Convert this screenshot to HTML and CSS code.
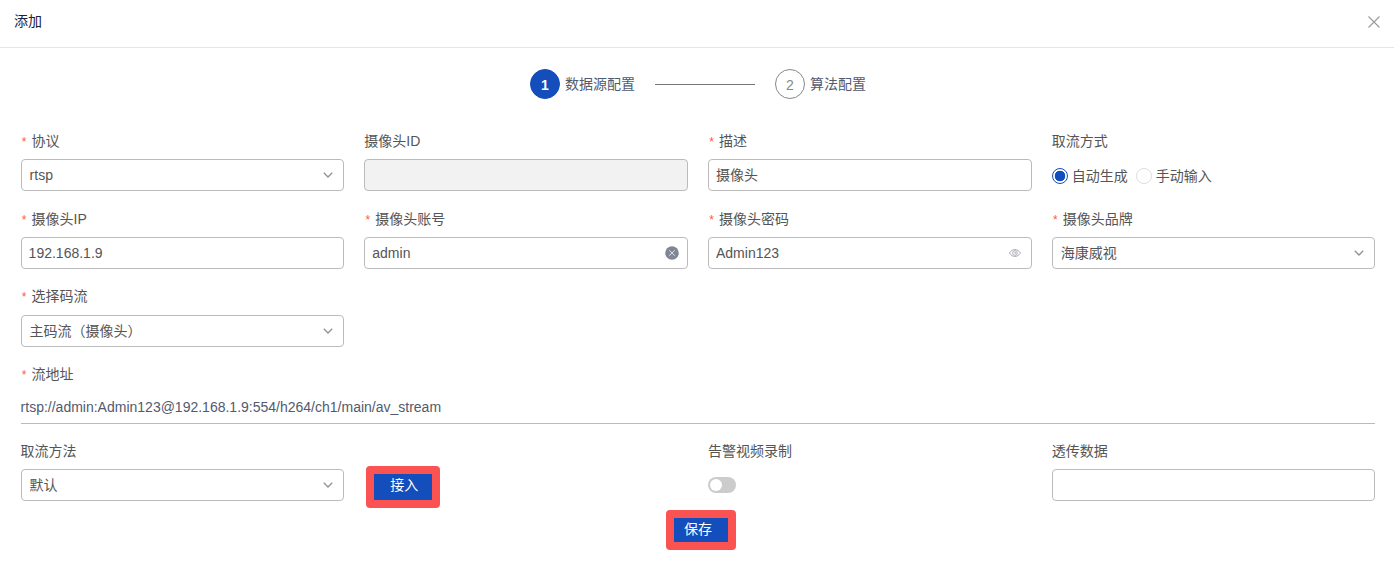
FILE: index.html
```
<!DOCTYPE html>
<html lang="zh-CN">
<head>
    <meta charset="UTF-8">
    <meta name="viewport" content="width=device-width, initial-scale=1.0">
    <title>添加</title>
    <link rel="stylesheet" href="styles.css">
</head>
<body>
    <div class="head">
        <h1 class="title">添加</h1>
        <svg class="close" viewBox="0 0 14 14"><path d="M1.5 1.5l11 11M12.5 1.5l-11 11"/></svg>
    </div>

    <!-- Steps -->
    <div class="steps">
        <span class="step-num active">1</span>
        <span class="step-name">数据源配置</span>
        <span class="step-line"></span>
        <span class="step-num">2</span>
        <span class="step-name">算法配置</span>
    </div>

    <form class="camera-form">
        <div class="field">
            <label class="required">协议</label>
            <div class="box select">rtsp<svg class="arrow" viewBox="0 0 10 6"><path d="M0.8 0.8L5 5l4.2-4.2"/></svg></div>
        </div>
        <div class="field">
            <label>摄像头ID</label>
            <div class="box disabled"></div>
        </div>
        <div class="field">
            <label class="required">描述</label>
            <div class="box">摄像头</div>
        </div>
        <div class="field">
            <label>取流方式</label>
            <div class="radios">
                <span class="radio checked"></span><span class="radio-text">自动生成</span>
                <span class="radio"></span><span class="radio-text">手动输入</span>
            </div>
        </div>

        <div class="field">
            <label class="required">摄像头IP</label>
            <div class="box">192.168.1.9</div>
        </div>
        <div class="field">
            <label class="required">摄像头账号</label>
            <div class="box">admin<svg class="clear" viewBox="0 0 14 14"><circle cx="7" cy="7" r="6.8"/><path d="M4.2 4.2l5.6 5.6M9.8 4.2L4.2 9.8"/></svg></div>
        </div>
        <div class="field">
            <label class="required">摄像头密码</label>
            <div class="box">Admin123<svg class="eye" viewBox="0 0 12 8"><path d="M0.5 4C3.2-0.6 8.8-0.6 11.5 4C8.8 8.6 3.2 8.6 0.5 4z"/><circle cx="6" cy="4" r="2.3"/><path d="M6 2.8v1.4h1.2"/></svg></div>
        </div>
        <div class="field">
            <label class="required">摄像头品牌</label>
            <div class="box select">海康威视<svg class="arrow" viewBox="0 0 10 6"><path d="M0.8 0.8L5 5l4.2-4.2"/></svg></div>
        </div>

        <div class="field first stream">
            <label class="required">选择码流</label>
            <div class="box select">主码流（摄像头）<svg class="arrow" viewBox="0 0 10 6"><path d="M0.8 0.8L5 5l4.2-4.2"/></svg></div>
        </div>

        <div class="field full">
            <label class="required">流地址</label>
            <div class="address">rtsp://admin:Admin123@192.168.1.9:554/h264/ch1/main/av_stream</div>
        </div>

        <div class="field first">
            <label>取流方法</label>
            <div class="box select">默认<svg class="arrow" viewBox="0 0 10 6"><path d="M0.8 0.8L5 5l4.2-4.2"/></svg></div>
        </div>
        <div class="field access">
            <button type="button" class="btn">接入</button>
        </div>
        <div class="field">
            <label>告警视频录制</label>
            <div class="switch"></div>
        </div>
        <div class="field">
            <label>透传数据</label>
            <div class="box"></div>
        </div>
    </form>

    <div class="footer">
        <button type="button" class="btn save">保存</button>
    </div>
</body>
</html>
```
FILE: styles.css
```
* {
    box-sizing: border-box;
    margin: 0;
    padding: 0;
}

body {
    font-family: "Liberation Sans", "Noto Sans CJK SC", sans-serif;
    font-size: 14px;
    line-height: 20px;
    color: #555;
    background-color: #fff;
    overflow: hidden;
}

svg {
    fill: none;
    flex: none;
}

.head {
    display: flex;
    justify-content: space-between;
    align-items: center;
    height: 48px;
    padding: 0 13px 5px 14px;
    border-bottom: 1px solid #e6e6e6;
}

.title {
    font-size: 14px;
    font-weight: normal;
    color: #17233d;
}

.close {
    width: 14px;
    height: 14px;
    margin-top: 1px;
    stroke: #999;
    stroke-width: 1.1;
}

/* Steps */
.steps {
    display: flex;
    align-items: center;
    height: 72px;
    padding-left: 530px;
}

.step-num {
    width: 30px;
    height: 30px;
    border: 1px solid #888;
    border-radius: 50%;
    line-height: 31px;
    text-align: center;
    color: #888;
}

.step-num.active {
    border-color: #144dbc;
    background-color: #144dbc;
    color: #fff;
    font-weight: bold;
}

.step-name {
    margin-left: 5px;
    color: #515a6e;
}

.step-line {
    width: 100px;
    height: 1px;
    margin: 0 20px;
    background-color: #777;
}

/* Form */
.camera-form {
    display: grid;
    grid-template-columns: repeat(4, 1fr);
    column-gap: 20px;
    padding: 11px 18.6px 0 20.6px;
}

.field {
    height: 77.6px;
}

.first {
    grid-column-start: 1;
}

.full {
    grid-column: 1 / -1;
}

label {
    display: block;
    height: 28px;
}

.stream label {
    height: 28.6px;
}

.required::before {
    content: "*";
    margin-right: 3.8px;
    font-family: "Liberation Mono", monospace;
    font-size: 12px;
    line-height: 1;
    color: #ff5a36;
}

.box {
    display: flex;
    justify-content: space-between;
    align-items: center;
    height: 32px;
    padding: 0 7px;
    border: 1px solid #bbb;
    border-radius: 4px;
}

.select {
    padding: 0 10px 0 8px;
}

.disabled {
    background-color: #f2f2f2;
}

.arrow {
    width: 10px;
    height: 6px;
    stroke: #909090;
    stroke-width: 1.3;
}

.clear {
    width: 14px;
    height: 14px;
    margin-right: 1px;
    fill: #808695;
    stroke: none;
}

.clear path {
    stroke: #dcdee2;
    stroke-width: 1;
}

.eye {
    width: 12px;
    height: 8px;
    margin-right: 3px;
    stroke: #a0a4b0;
    stroke-width: 0.9;
}

.radios {
    display: flex;
    align-items: center;
    height: 34px;
}

.radio {
    width: 16px;
    height: 16px;
    border: 1px solid #dcdee2;
    border-radius: 50%;
}

.radio.checked {
    border-color: #144dbc;
    background: radial-gradient(circle, #144dbc 5px, #fff 5.6px);
}

.radio-text {
    margin: 0 8px 0 4px;
}

.address {
    height: 32px;
    border-bottom: 1px solid #bbb;
    line-height: 30px;
    color: #515a6e;
}

.access {
    padding: 25px 0 0 2px;
}

/* Buttons */
.btn {
    width: 74px;
    height: 42px;
    padding: 0 0 5px 2px;
    border: 8px solid #fb5252;
    border-radius: 4px;
    background-color: #144dbc;
    color: #fff;
    font-family: inherit;
    font-size: 14px;
    line-height: 20px;
}

.switch {
    width: 28px;
    height: 16px;
    margin-top: 8px;
    padding: 2px;
    border-radius: 8px;
    background-color: #ccc;
}

.switch::before {
    content: "";
    display: block;
    width: 12px;
    height: 12px;
    border-radius: 50%;
    background-color: #fff;
}

.footer {
    margin-top: -9px;
    padding-left: 666px;
}

.save {
    width: 70px;
    height: 40px;
    padding: 0 6px 2px 0;
}
```
